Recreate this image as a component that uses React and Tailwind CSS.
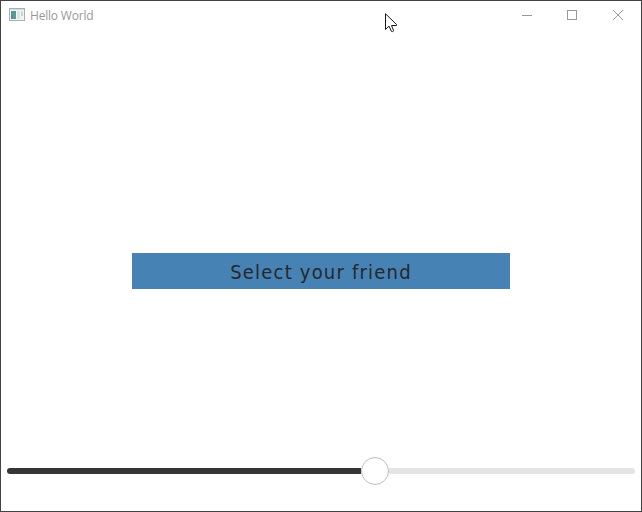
function AppIcon() {
  return (
    <svg width="16" height="13" viewBox="0 0 16 13" shapeRendering="crispEdges">
      <rect width="16" height="13" fill="#a9aeb1" />
      <rect x="1" y="1" width="14" height="1" fill="#d5dadd" />
      <rect x="1" y="2" width="14" height="10" fill="#f2f4f5" />
      <rect x="2" y="3" width="5" height="8" fill="#5c91ac" />
      <rect x="3" y="5" width="4" height="5" fill="#55a184" />
      <rect x="2" y="7" width="2" height="4" fill="#5783b8" />
      <rect x="8" y="3" width="3" height="8" fill="#e0e2e3" />
      <rect x="12" y="3" width="2" height="5" fill="#c8d2dc" />
      <rect x="12" y="3" width="2" height="2" fill="#d5dfd8" />
    </svg>
  );
}

function TitleBar() {
  return (
    <header className="flex h-[30px] shrink-0 items-start">
      <div className="flex pl-2 pt-[7px]">
        <AppIcon />
      </div>
      <h1 className="ml-[5px] mt-[7px] font-['Open_Sans',sans-serif] text-[12px] leading-4 tracking-[-0.2px] text-[#999999]">
        Hello World
      </h1>
      <div className="ml-auto flex pr-[18px] pt-[9px] text-[#999999]">
        <svg className="mr-[35px]" width="10" height="10" shapeRendering="crispEdges">
          <rect y="5" width="10" height="1" fill="currentColor" />
        </svg>
        <svg className="mr-9" width="10" height="10" fill="none" stroke="currentColor">
          <rect x="0.5" y="0.5" width="9" height="9" />
        </svg>
        <svg width="10" height="10" fill="none" stroke="currentColor">
          <path d="M0 0L10 10M10 0L0 10" />
        </svg>
      </div>
    </header>
  );
}

function Slider() {
  return (
    <div className="flex h-7 w-[628px] items-center">
      <div className="h-1.5 w-[354px] rounded-l-full bg-[#353637]" />
      <div className="h-7 w-7 rounded-full border border-[#bdbdbd] bg-white" />
      <div className="h-1.5 flex-1 rounded-r-full bg-[#e4e4e4]" />
    </div>
  );
}

export default function App() {
  return (
    <div className="relative flex h-[512px] w-[642px] flex-col border border-[#434343] bg-white">
      <TitleBar />
      <main className="flex flex-1 flex-col items-center pt-[222px]">
        <button className="flex h-9 w-[378px] items-center justify-center bg-[#4682b4] pt-0.5 font-['DejaVu_Sans_Condensed','DejaVu_Sans',sans-serif] text-[20px] leading-[34px] tracking-[1.2px] text-[#26282a]">
          Select your friend
        </button>
        <div className="mt-[168px]">
          <Slider />
        </div>
      </main>
      <svg className="absolute left-[384px] top-[12px]" width="13" height="20" viewBox="0 0 13 20">
        <path
          d="M0.5 0.8V16.5L4 13.1L6.4 18.3Q7.3 19.2 8.7 17.8L6.5 12.5H11.5V11.5Z"
          fill="white"
          stroke="#15151f"
        />
      </svg>
    </div>
  );
}
